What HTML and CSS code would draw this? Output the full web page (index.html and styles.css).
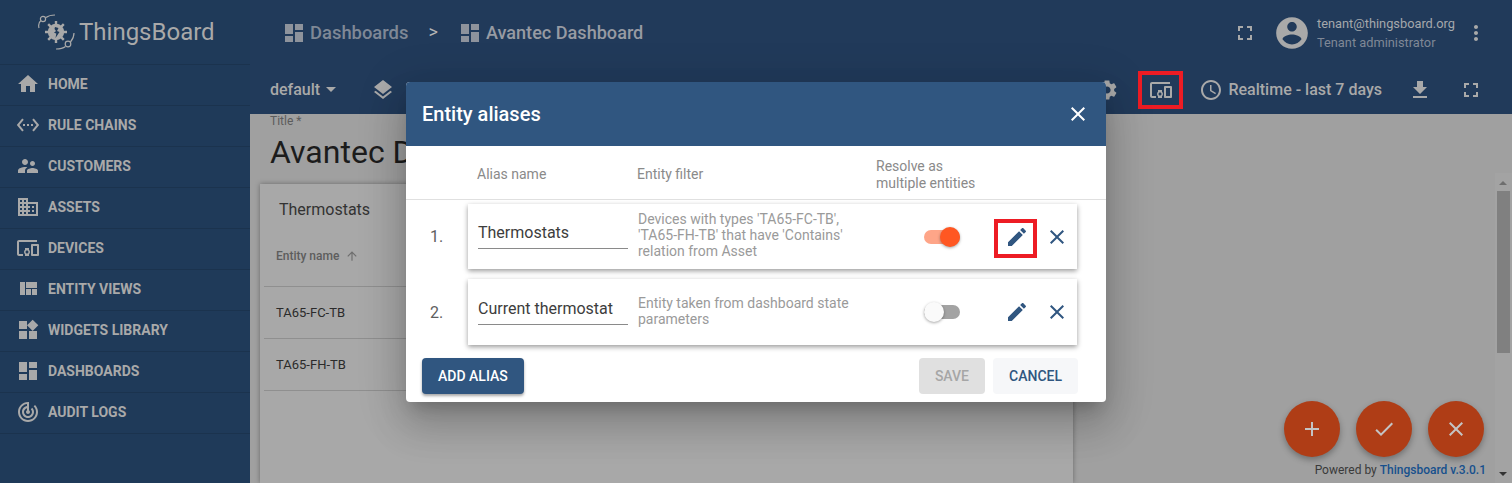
FILE: index.html
```html
<!DOCTYPE html>
<html>
<head>
    <meta charset="utf-8">
    <title>ThingsBoard</title>
    <link rel="stylesheet" href="styles.css">
</head>
<body>
    <svg class="sprite" xmlns="http://www.w3.org/2000/svg">
        <symbol id="i-home" viewBox="0 0 24 24"><path d="M10 20v-6h4v6h5v-8h3L12 3 2 12h3v8z"/></symbol>
        <symbol id="i-rule" viewBox="0 0 24 24"><path d="M7.77 6.76L6.23 5.48.82 12l5.41 6.52 1.54-1.28L3.42 12l4.35-5.24zM7 13h2v-2H7v2zm10-2h-2v2h2v-2zm-6 2h2v-2h-2v2zm6.77-7.52l-1.54 1.28L20.58 12l-4.35 5.24 1.54 1.28L23.18 12l-5.41-6.52z"/></symbol>
        <symbol id="i-customers" viewBox="0 0 24 24"><path d="M16.5 12c1.38 0 2.49-1.12 2.49-2.5S17.88 7 16.5 7C15.12 7 14 8.12 14 9.5s1.12 2.5 2.5 2.5zM9 11c1.66 0 2.99-1.34 2.99-3S10.66 5 9 5C7.34 5 6 6.34 6 8s1.34 3 3 3zm7.5 3c-1.83 0-5.5.92-5.5 2.75V19h11v-2.25c0-1.83-3.67-2.75-5.5-2.75zM9 13c-2.33 0-7 1.17-7 3.5V19h7v-2.25c0-.85.33-2.34 2.37-3.47C10.5 13.1 9.66 13 9 13z"/></symbol>
        <symbol id="i-assets" viewBox="0 0 24 24"><path d="M12 7V3H2v18h20V7H10zM6 19H4v-2h2v2zm0-4H4v-2h2v2zm0-4H4V9h2v2zm0-4H4V5h2v2zm4 12H8v-2h2v2zm0-4H8v-2h2v2zm0-4H8V9h2v2zm0-4H8V5h2v2zm10 12h-8v-2h2v-2h-2v-2h2v-2h-2V9h8v10zm-2-8h-2v2h2v-2zm0 4h-2v2h2v-2z"/></symbol>
        <symbol id="i-devices" viewBox="0 0 24 24"><path d="M3 6h18V4H3c-1.1 0-2 .9-2 2v12c0 1.1.9 2 2 2h4v-2H3V6zm10 6H9v1.78c-.61.55-1 1.33-1 2.22s.39 1.67 1 2.22V20h4v-1.78c.61-.55 1-1.34 1-2.22s-.39-1.67-1-2.22V12zm-2 5.5c-.83 0-1.5-.67-1.5-1.5s.67-1.5 1.5-1.5 1.5.67 1.5 1.5-.67 1.5-1.5 1.5zM22 8h-6c-.5 0-1 .5-1 1v10c0 .5.5 1 1 1h6c.5 0 1-.5 1-1V9c0-.5-.5-1-1-1zm-1 10h-4v-8h4v8z"/></symbol>
        <symbol id="i-views" viewBox="0 0 24 24"><path d="M10 18h5v-6h-5v6zm-6 0h5V5H4v13zm12 0h5v-6h-5v6zM10 5v6h11V5H10z"/></symbol>
        <symbol id="i-widgets" viewBox="0 0 24 24"><path d="M13 13v8h8v-8h-8zM3 21h8v-8H3v8zM3 3v8h8V3H3zm13.66-1.31L11 7.34 16.66 13l5.66-5.66-5.66-5.65z"/></symbol>
        <symbol id="i-dash" viewBox="0 0 24 24"><path d="M3 13h8V3H3v10zm0 8h8v-6H3v6zm10 0h8V11h-8v10zm0-18v6h8V3h-8z"/></symbol>
        <symbol id="i-audit" viewBox="0 0 24 24"><path d="M19.07 4.93l-1.41 1.41C19.1 7.79 20 9.79 20 12c0 4.42-3.58 8-8 8s-8-3.58-8-8c0-4.08 3.05-7.44 7-7.93v2.02C8.16 6.57 6 9.03 6 12c0 3.31 2.69 6 6 6s6-2.69 6-6c0-1.66-.67-3.16-1.76-4.24l-1.41 1.41C15.55 9.9 16 10.9 16 12c0 2.21-1.79 4-4 4s-4-1.79-4-4c0-1.86 1.28-3.41 3-3.86v2.14c-.6.35-1 .98-1 1.72 0 1.1.9 2 2 2s2-.9 2-2c0-.74-.4-1.38-1-1.72V2h-1C6.48 2 2 6.48 2 12s4.48 10 10 10 10-4.48 10-10c0-2.76-1.12-5.26-2.93-7.07z"/></symbol>
        <symbol id="i-full" viewBox="0 0 24 24"><path d="M7 14H5v5h5v-2H7v-3zm-2-4h2V7h3V5H5v5zm12 7h-3v2h5v-5h-2v3zM14 5v2h3v3h2V5h-5z"/></symbol>
        <symbol id="i-account" viewBox="0 0 24 24"><path d="M12 2C6.48 2 2 6.48 2 12s4.48 10 10 10 10-4.48 10-10S17.52 2 12 2zm0 3c1.66 0 3 1.34 3 3s-1.34 3-3 3-3-1.34-3-3 1.34-3 3-3zm0 14.2c-2.5 0-4.71-1.28-6-3.22.03-1.99 4-3.08 6-3.08 1.99 0 5.97 1.09 6 3.08-1.29 1.94-3.5 3.22-6 3.22z"/></symbol>
        <symbol id="i-more" viewBox="0 0 24 24"><path d="M12 8c1.1 0 2-.9 2-2s-.9-2-2-2-2 .9-2 2 .9 2 2 2zm0 2c-1.1 0-2 .9-2 2s.9 2 2 2 2-.9 2-2-.9-2-2-2zm0 6c-1.1 0-2 .9-2 2s.9 2 2 2 2-.9 2-2-.9-2-2-2z"/></symbol>
        <symbol id="i-layers" viewBox="0 0 24 24"><path d="M11.99 18.54l-7.37-5.73L3 14.07l9 7 9-7-1.63-1.27-7.38 5.74zM12 16l7.36-5.73L21 9l-9-7-9 7 1.63 1.27L12 16z"/></symbol>
        <symbol id="i-settings" viewBox="0 0 24 24"><path d="M19.14 12.94c.04-.3.06-.61.06-.94 0-.32-.02-.64-.07-.94l2.03-1.58c.18-.14.23-.41.12-.61l-1.92-3.32c-.12-.22-.37-.29-.59-.22l-2.39.96c-.5-.38-1.03-.7-1.62-.94l-.36-2.54c-.04-.24-.24-.41-.48-.41h-3.84c-.24 0-.43.17-.47.41l-.36 2.54c-.59.24-1.13.57-1.62.94l-2.39-.96c-.22-.08-.47 0-.59.22L2.74 8.87c-.12.21-.08.47.12.61l2.03 1.58c-.05.3-.09.63-.09.94s.02.64.07.94l-2.03 1.58c-.18.14-.23.41-.12.61l1.92 3.32c.12.22.37.29.59.22l2.39-.96c.5.38 1.03.7 1.62.94l.36 2.54c.05.24.24.41.48.41h3.84c.24 0 .44-.17.47-.41l.36-2.54c.59-.24 1.13-.56 1.62-.94l2.39.96c.22.08.47 0 .59-.22l1.92-3.32c.12-.22.07-.47-.12-.61l-2.01-1.58zM12 15.6c-1.98 0-3.6-1.62-3.6-3.6s1.62-3.6 3.6-3.6 3.6 1.62 3.6 3.6-1.62 3.6-3.6 3.6z"/></symbol>
        <symbol id="i-clock" viewBox="0 0 24 24"><path d="M11.99 2C6.47 2 2 6.48 2 12s4.47 10 9.99 10C17.52 22 22 17.52 22 12S17.52 2 11.99 2zM12 20c-4.42 0-8-3.58-8-8s3.58-8 8-8 8 3.58 8 8-3.58 8-8 8zm.5-13H11v6l5.25 3.15.75-1.23-4.5-2.67z"/></symbol>
        <symbol id="i-download" viewBox="0 0 24 24"><path d="M19 9h-4V3H9v6H5l7 7 7-7zM5 18v2h14v-2H5z"/></symbol>
        <symbol id="i-edit" viewBox="0 0 24 24"><path d="M3 17.25V21h3.75L17.81 9.94l-3.75-3.75L3 17.25zM20.71 7.04c.39-.39.39-1.02 0-1.41l-2.34-2.34c-.39-.39-1.02-.39-1.41 0l-1.83 1.83 3.75 3.75 1.83-1.83z"/></symbol>
        <symbol id="i-close" viewBox="0 0 24 24"><path d="M19 6.41L17.59 5 12 10.59 6.41 5 5 6.41 10.59 12 5 17.59 6.41 19 12 13.41 17.59 19 19 17.59 13.41 12z"/></symbol>
        <symbol id="i-add" viewBox="0 0 24 24"><path d="M19 13h-6v6h-2v-6H5v-2h6V5h2v6h6v2z"/></symbol>
        <symbol id="i-check" viewBox="0 0 24 24"><path d="M9 16.17L4.83 12l-1.42 1.41L9 19 21 7l-1.41-1.41z"/></symbol>
        <symbol id="i-up" viewBox="0 0 24 24"><path d="M4 12l1.41 1.41L11 7.83V20h2V7.83l5.58 5.59L20 12l-8-8-8 8z"/></symbol>
    </svg>

    <div class="app">
        <aside class="sidebar">
            <div class="logo">
                <svg class="logo-mark" viewBox="0 0 37 37">
                    <g fill="none" stroke="#a9a9a9" stroke-width="1.2">
                        <path d="M1 14C0 10 1 8 3 6.500"/>
                        <circle cx="5" cy="5" r="2.600"/>
                        <path d="M8 3.500C10 2 14 1 17 1"/>
                        <path d="M36 19c0 4-1 6-3.500 9"/>
                        <circle cx="30" cy="30" r="2.800"/>
                        <path d="M27.500 32.500c-2 1.500-5 2.500-9.500 2.500"/>
                    </g>
                    <circle cx="18" cy="18" r="8.200" fill="#a9a9a9"/>
                    <g stroke="#a9a9a9" stroke-width="2.400">
                        <path d="M18 7v22M7 18h22M10.200 10.200l15.600 15.600M25.800 10.200L10.200 25.800"/>
                    </g>
                    <path d="M17 13l3.500 1-1.500 3 2.500 1-4 6 .8-4.500-2.300-.8 2-1.700-1.500-2z" fill="#1f3a59"/>
                </svg>
                <span class="logo-text">ThingsBoard</span>
            </div>
            <nav class="nav">
                <a class="nav-item"><svg class="icon"><use href="#i-home"/></svg>HOME</a>
                <a class="nav-item"><svg class="icon"><use href="#i-rule"/></svg>RULE CHAINS</a>
                <a class="nav-item"><svg class="icon"><use href="#i-customers"/></svg>CUSTOMERS</a>
                <a class="nav-item"><svg class="icon"><use href="#i-assets"/></svg>ASSETS</a>
                <a class="nav-item"><svg class="icon"><use href="#i-devices"/></svg>DEVICES</a>
                <a class="nav-item"><svg class="icon"><use href="#i-views"/></svg>ENTITY VIEWS</a>
                <a class="nav-item"><svg class="icon"><use href="#i-widgets"/></svg>WIDGETS LIBRARY</a>
                <a class="nav-item"><svg class="icon"><use href="#i-dash"/></svg>DASHBOARDS</a>
                <a class="nav-item"><svg class="icon"><use href="#i-audit"/></svg>AUDIT LOGS</a>
            </nav>
        </aside>

        <main class="main">
            <header class="topbar">
                <div class="crumbs">
                    <svg class="icon crumb-icon"><use href="#i-dash"/></svg>
                    <span class="crumb-dim">Dashboards</span>
                    <span class="crumb-sep">&gt;</span>
                    <svg class="icon crumb-icon"><use href="#i-dash"/></svg>
                    <span class="crumb-cur">Avantec Dashboard</span>
                </div>
                <div class="user">
                    <svg class="icon"><use href="#i-full"/></svg>
                    <svg class="icon avatar"><use href="#i-account"/></svg>
                    <div class="user-info">
                        <div class="user-mail">tenant@thingsboard.org</div>
                        <div class="user-role">Tenant administrator</div>
                    </div>
                    <svg class="icon"><use href="#i-more"/></svg>
                </div>
            </header>

            <div class="toolbar">
                <div class="toolbar-left">
                    <span class="state">default<i class="caret"></i></span>
                    <svg class="icon"><use href="#i-layers"/></svg>
                </div>
                <div class="toolbar-right">
                    <svg class="icon"><use href="#i-settings"/></svg>
                    <span class="mark-box"><svg class="icon"><use href="#i-devices"/></svg></span>
                    <span class="timewindow"><svg class="icon"><use href="#i-clock"/></svg>Realtime - last 7 days</span>
                    <svg class="icon"><use href="#i-download"/></svg>
                    <svg class="icon"><use href="#i-full"/></svg>
                </div>
            </div>

            <div class="content">
                <div class="title-label">Title *</div>
                <h1 class="title">Avantec Dashboard</h1>
                <div class="work">
                    <section class="widget">
                        <div class="widget-title">Thermostats</div>
                        <div class="table-head">Entity name <svg class="sort"><use href="#i-up"/></svg></div>
                        <div class="table-row">TA65-FC-TB</div>
                        <div class="table-row">TA65-FH-TB</div>
                    </section>
                </div>
                <div class="scrollbar">
                    <i class="scroll-up"></i>
                    <div class="scroll-thumb"></div>
                    <i class="scroll-down"></i>
                </div>
            </div>
        </main>
    </div>

    <div class="fabs">
        <span class="fab"><svg class="icon"><use href="#i-add"/></svg></span>
        <span class="fab"><svg class="icon"><use href="#i-check"/></svg></span>
        <span class="fab"><svg class="icon"><use href="#i-close"/></svg></span>
    </div>
    <div class="powered">Powered by <b>Thingsboard v.3.0.1</b></div>

    <div class="dialog">
        <div class="dialog-head">
            <h2>Entity aliases</h2>
            <svg class="icon"><use href="#i-close"/></svg>
        </div>
        <div class="alias-head">
            <span class="col-name">Alias name</span>
            <span class="col-filter">Entity filter</span>
            <span class="col-resolve">Resolve as<br>multiple entities</span>
        </div>
        <div class="alias-list">
            <div class="alias">
                <span class="alias-num">1.</span>
                <div class="alias-card tall">
                    <div class="alias-input">Thermostats</div>
                    <div class="alias-filter">Devices with types 'TA65-FC-TB', 'TA65-FH-TB' that have 'Contains' relation from Asset</div>
                    <span class="toggle on"></span>
                    <span class="edit-box marked"><svg class="icon"><use href="#i-edit"/></svg></span>
                    <svg class="icon remove"><use href="#i-close"/></svg>
                </div>
            </div>
            <div class="alias">
                <span class="alias-num">2.</span>
                <div class="alias-card">
                    <div class="alias-input">Current thermostat</div>
                    <div class="alias-filter">Entity taken from dashboard state parameters</div>
                    <span class="toggle"></span>
                    <span class="edit-box"><svg class="icon"><use href="#i-edit"/></svg></span>
                    <svg class="icon remove"><use href="#i-close"/></svg>
                </div>
            </div>
        </div>
        <div class="dialog-actions">
            <button class="btn btn-primary">ADD ALIAS</button>
            <span class="spacer"></span>
            <button class="btn btn-disabled">SAVE</button>
            <button class="btn btn-plain">CANCEL</button>
        </div>
    </div>
</body>
</html>
```

FILE: styles.css
```css
:root {
    --navy: #1f3a59;
    --navy-line: #1b334e;
    --dim-text: #a9a9a9;
    --blue: #305680;
    --backdrop: #a0a0a0;
}

* {
    box-sizing: border-box;
}

html, body {
    height: 100%;
    margin: 0;
    overflow: hidden;
}

body {
    font-family: Roboto, "Liberation Sans", sans-serif;
    color: #212121;
    background: var(--backdrop);
}

.sprite {
    display: none;
}

.icon {
    width: 24px;
    height: 24px;
    fill: currentColor;
    flex: none;
}

.app {
    display: flex;
    height: 100%;
}

/* sidebar */
.sidebar {
    width: 250px;
    flex: none;
    background: var(--navy);
    color: var(--dim-text);
}

.logo {
    height: 65px;
    display: flex;
    align-items: center;
    padding-left: 38px;
    gap: 4px;
    border-bottom: 1px solid var(--navy-line);
}

.logo-mark {
    width: 37px;
    height: 37px;
}

.logo-text {
    font-size: 24px;
}

.nav-item {
    height: 41px;
    display: flex;
    align-items: center;
    gap: 8px;
    padding: 0 0 2px 16px;
    font-size: 14px;
    font-weight: 700;
    border-bottom: 1px solid var(--navy-line);
}

/* header */
.main {
    flex: 1;
    min-width: 0;
    display: flex;
    flex-direction: column;
}

.topbar {
    height: 65px;
    flex: none;
    display: flex;
    align-items: center;
    justify-content: space-between;
    padding: 0 24px 0 32px;
    background: #213a5a;
    color: var(--dim-text);
}

.crumbs {
    display: flex;
    align-items: center;
}

.crumb-icon {
    margin-right: 4px;
    color: #8e939c;
}

.crumb-dim {
    color: #7f8896;
    font-size: 18.4px;
    font-weight: 500;
}

.crumb-sep {
    margin: -3px 20px 0 20px;
    font-size: 18px;
    color: #b5b5b5;
}

.crumb-cur {
    color: #979ba3;
    font-size: 18.1px;
    font-weight: 500;
}

.user {
    display: flex;
    align-items: center;
}

.avatar {
    width: 38px;
    height: 38px;
    margin-left: 16px;
}

.user-info {
    margin: 0 6px;
    width: 141px;
}

.user-mail {
    font-size: 12.8px;
    color: #a5a8ac;
    margin-bottom: 4px;
}

.user-role {
    font-size: 12.8px;
    color: #7f8896;
}

.toolbar {
    height: 49px;
    flex: none;
    display: flex;
    align-items: center;
    justify-content: space-between;
    padding: 0 29px 0 20px;
    background: #213a5a;
    color: var(--dim-text);
}

.toolbar-left {
    display: flex;
    align-items: center;
    gap: 35px;
}

.state {
    display: flex;
    align-items: center;
    font-size: 16px;
    font-weight: 500;
}

.caret {
    margin-left: 6px;
    border: 5px solid transparent;
    border-top-color: currentColor;
    border-bottom: 0;
}

.toolbar-right {
    display: flex;
    align-items: center;
}

.mark-box {
    width: 45px;
    height: 38px;
    margin: 0 16px 0 19px;
    display: flex;
    align-items: center;
    justify-content: center;
    border: 4px solid #ed1c24;
}

.timewindow {
    display: flex;
    align-items: center;
    gap: 5px;
    font-size: 16px;
    font-weight: 500;
    margin-right: 26px;
}

.toolbar-right .timewindow + .icon {
    margin-right: 27px;
}

/* dashboard behind the dialog */
.content {
    flex: 1;
    min-height: 0;
    display: flex;
    flex-direction: column;
    position: relative;
    padding-left: 20px;
    background: var(--backdrop);
}

.title-label {
    font-size: 12px;
    line-height: 14px;
    color: #5c5c5c;
}

.title {
    margin: -1px 0 0;
    font-size: 32px;
    line-height: 50px;
    font-weight: 400;
    color: #1c1c1c;
}

.work {
    flex: 1;
    min-height: 0;
    margin-left: -10px;
    padding-top: 7px;
}

.widget {
    width: 813px;
    height: 100%;
    background: #a8a8a8;
    box-shadow: 0 0 5px rgba(0, 0, 0, 0.35);
    padding: 0 4px;
}

.widget-title {
    padding: 16px 15px 0;
    height: 53px;
    font-size: 16px;
    color: #333;
}

.table-head {
    height: 50px;
    padding: 12px 12px 0;
    font-size: 12px;
    color: #5d5d5d;
    display: flex;
    align-items: flex-start;
    gap: 6px;
    border-bottom: 1px solid #8f8f8f;
    font-weight: 500;
}

.sort {
    width: 14px;
    height: 14px;
    fill: #6e6e6e;
}

.table-row {
    height: 52px;
    padding: 0 12px;
    display: flex;
    align-items: center;
    font-size: 13px;
    color: #2b2b2b;
    border-bottom: 1px solid #8f8f8f;
}

.scrollbar {
    position: absolute;
    top: 59px;
    right: 0;
    bottom: 0;
    width: 17px;
    background: #a3a3a3;
}

.scroll-thumb {
    position: absolute;
    top: 18px;
    left: 2px;
    right: 2px;
    height: 162px;
    background: #808080;
}

.scroll-up,
.scroll-down {
    position: absolute;
    left: 4px;
    border: 4px solid transparent;
}

.scroll-up {
    top: 8px;
    border-bottom-color: #6e6e6e;
    border-top: 0;
}

.scroll-down {
    bottom: 7px;
    border-top-color: #333;
    border-bottom: 0;
}

/* floating buttons */
.fabs {
    position: absolute;
    right: 28px;
    top: 401px;
    display: flex;
    gap: 16px;
}

.fab {
    width: 56px;
    height: 56px;
    border-radius: 50%;
    display: flex;
    align-items: center;
    justify-content: center;
    background: #af3d16;
    color: #c4c4c4;
    box-shadow: 0 3px 6px rgba(0, 0, 0, 0.3);
}

.powered {
    position: absolute;
    right: 26px;
    bottom: 6px;
    font-size: 12px;
    color: #3a3a3a;
}

.powered b {
    color: #17508d;
    font-weight: 500;
}

/* dialog */
.dialog {
    position: absolute;
    left: 406px;
    top: 82px;
    width: 700px;
    height: 320px;
    display: flex;
    flex-direction: column;
    background: #fff;
    border-radius: 4px;
    box-shadow: 0 11px 15px -7px rgba(0, 0, 0, 0.2), 0 24px 38px 3px rgba(0, 0, 0, 0.14), 0 9px 46px 8px rgba(0, 0, 0, 0.12);
    overflow: hidden;
}

.dialog-head {
    height: 64px;
    flex: none;
    display: flex;
    align-items: center;
    justify-content: space-between;
    padding: 0 16px;
    background: var(--blue);
    color: #fff;
}

.dialog-head h2 {
    margin: 0;
    font-size: 20px;
    font-weight: 500;
}

.alias-head {
    height: 54px;
    flex: none;
    display: flex;
    align-items: center;
    padding: 4px 0 0 71px;
    font-size: 14px;
    line-height: 17px;
    color: #8a8a8a;
    border-bottom: 1px solid #e0e0e0;
}

.col-name {
    width: 160px;
}

.col-filter {
    width: 239px;
}

.alias-list {
    display: flex;
    flex-direction: column;
    gap: 10px;
    padding-top: 4px;
}

.alias {
    display: flex;
    align-items: center;
    padding-left: 24px;
}

.alias-num {
    width: 38px;
    font-size: 16px;
    color: #5e5e5e;
}

.alias-card {
    width: 609px;
    height: 66px;
    display: flex;
    align-items: center;
    padding: 0 10px;
    background: #fff;
    box-shadow: 0 2px 5px rgba(0, 0, 0, 0.4);
}

.alias-card.tall {
    height: 65px;
}

.alias-input {
    width: 150px;
    flex: none;
    height: 28px;
    margin-top: -3px;
    font-size: 16px;
    line-height: 24px;
    color: #3d3d3d;
    border-bottom: 1px solid #8a8a8a;
    white-space: nowrap;
}

.alias-filter {
    width: 222px;
    flex: none;
    margin: -3px 0 0 10px;
    font-size: 14px;
    line-height: 16px;
    color: #9a9a9a;
}

.toggle {
    position: relative;
    width: 36px;
    height: 14px;
    flex: none;
    margin: 0 34px 0 64px;
    border-radius: 7px;
    background: #a3a3a3;
}

.toggle::after {
    content: "";
    position: absolute;
    left: 0;
    top: -3px;
    width: 20px;
    height: 20px;
    border-radius: 50%;
    background: #fafafa;
    box-shadow: 0 1px 3px rgba(0, 0, 0, 0.35);
}

.toggle.on {
    background: #fea588;
}

.toggle.on::after {
    left: 16px;
    background: #ff5722;
}

.edit-box {
    width: 43px;
    height: 39px;
    flex: none;
    display: flex;
    align-items: center;
    justify-content: center;
    margin-top: 4px;
    padding: 0 0 4px 3px;
    color: var(--blue);
}

.edit-box.marked {
    border: 4px solid #ed1c24;
}

.remove {
    margin-left: 8px;
    color: var(--blue);
}

.dialog-actions {
    display: flex;
    align-items: center;
    gap: 8px;
    padding: 13px 28px 0 16px;
}

.spacer {
    flex: 1;
}

.btn {
    height: 36px;
    padding: 0 16px;
    border: 0;
    border-radius: 4px;
    font-family: inherit;
    font-size: 14px;
    font-weight: 500;
}

.btn-primary {
    background: var(--blue);
    color: #fff;
    box-shadow: 0 2px 3px rgba(0, 0, 0, 0.35);
}

.btn-disabled {
    background: #e0e0e0;
    color: #a6a6a6;
}

.btn-plain {
    background: #f6f7f9;
    color: var(--blue);
}
```
